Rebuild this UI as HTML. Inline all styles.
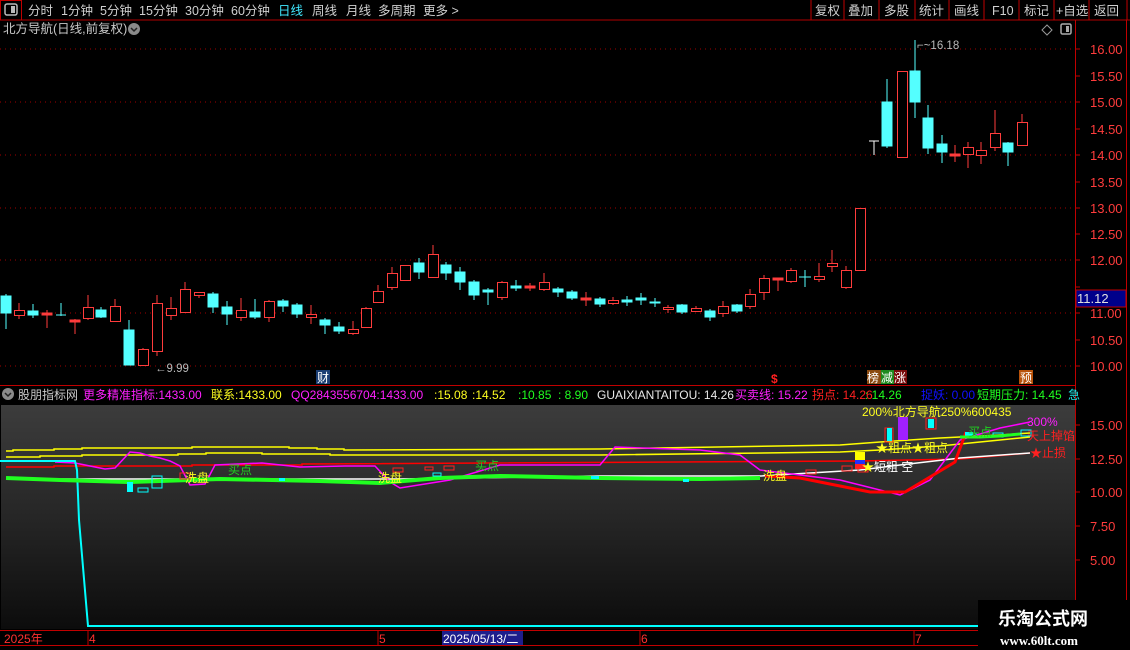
<!DOCTYPE html>
<html><head><meta charset="utf-8">
<style>
html,body{margin:0;padding:0;background:#000;width:1130px;height:650px;overflow:hidden;font-family:"Liberation Sans","Noto Sans CJK SC",sans-serif;}
svg{position:absolute;left:0;top:0}
text{font-family:"Liberation Sans","Noto Sans CJK SC",sans-serif;}
</style></head><body>
<svg width="1130" height="650" viewBox="0 0 1130 650" xmlns="http://www.w3.org/2000/svg">
<defs>
<linearGradient id="g" x1="0" y1="0" x2="0" y2="1">
<stop offset="0" stop-color="#3c3c3c"/><stop offset="0.5" stop-color="#262626"/><stop offset="1" stop-color="#0c0c0c"/>
</linearGradient>
</defs>
<!-- toolbar -->
<rect x="0" y="0" width="1130" height="20" fill="#000"/>
<line x1="0" y1="20" x2="1130" y2="20" stroke="#b00000" stroke-width="1"/>
<rect x="0.5" y="0.5" width="21" height="19.5" fill="none" stroke="#c00000"/>
<rect x="5" y="4" width="12" height="11" rx="2" fill="none" stroke="#bbb" stroke-width="1.5"/><rect x="11" y="6" width="4" height="7" fill="#bbb"/>
<g font-size="12.5" fill="#d0d0d0">
<text x="28" y="15">分时</text><text x="61" y="15">1分钟</text><text x="100" y="15">5分钟</text><text x="139" y="15">15分钟</text><text x="185" y="15">30分钟</text><text x="231" y="15">60分钟</text>
<text x="278" y="15" fill="#40e8ff">日线</text><text x="312" y="15">周线</text><text x="346" y="15">月线</text><text x="378" y="15">多周期</text><text x="423" y="15">更多 &gt;</text>
</g>
<g stroke="#c00000"><line x1="811" y1="0" x2="811" y2="20"/><line x1="844" y1="0" x2="844" y2="20"/><line x1="879" y1="0" x2="879" y2="20"/><line x1="915" y1="0" x2="915" y2="20"/><line x1="949" y1="0" x2="949" y2="20"/><line x1="984" y1="0" x2="984" y2="20"/><line x1="1019" y1="0" x2="1019" y2="20"/><line x1="1054" y1="0" x2="1054" y2="20"/><line x1="1089" y1="0" x2="1089" y2="20"/><line x1="1127" y1="0" x2="1127" y2="20"/></g>
<g font-size="12.5" fill="#d0d0d0">
<text x="815" y="15">复权</text><text x="848" y="15">叠加</text><text x="884" y="15">多股</text><text x="919" y="15">统计</text><text x="954" y="15">画线</text><text x="992" y="15">F10</text><text x="1024" y="15">标记</text><text x="1056" y="15">+自选</text><text x="1094" y="15">返回</text>
</g>
<!-- title row -->
<text x="3" y="33" font-size="12.5" fill="#c8c8c8">北方导航(日线,前复权)</text>
<circle cx="134" cy="29" r="6" fill="#8a8a8a"/><path d="M131 28l3 3 3-3" stroke="#222" stroke-width="1.5" fill="none"/>
<path d="M1047 25l5 5-5 5-5-5z" fill="none" stroke="#999"/>
<rect x="1061" y="24" width="10" height="10" rx="1.5" fill="none" stroke="#aaa" stroke-width="1.5"/><rect x="1066" y="26" width="3" height="6" fill="#aaa"/>
<!-- axes -->
<line x1="1075.5" y1="20" x2="1075.5" y2="630" stroke="#c00000"/>
<line x1="1126.5" y1="20" x2="1126.5" y2="630" stroke="#c00000"/>
<!-- grid -->
<g stroke="#a00000" stroke-dasharray="1,4">
<line x1="0" y1="49" x2="1075" y2="49"/><line x1="0" y1="102" x2="1075" y2="102"/><line x1="0" y1="155" x2="1075" y2="155"/><line x1="0" y1="208" x2="1075" y2="208"/><line x1="0" y1="260" x2="1075" y2="260"/><line x1="0" y1="313" x2="1075" y2="313"/><line x1="0" y1="366" x2="1075" y2="366"/>
</g>
<g stroke="#c00000"><line x1="1075" y1="49" x2="1080" y2="49"/><line x1="1075" y1="76" x2="1080" y2="76"/><line x1="1075" y1="102" x2="1080" y2="102"/><line x1="1075" y1="129" x2="1080" y2="129"/><line x1="1075" y1="155" x2="1080" y2="155"/><line x1="1075" y1="182" x2="1080" y2="182"/><line x1="1075" y1="208" x2="1080" y2="208"/><line x1="1075" y1="234" x2="1080" y2="234"/><line x1="1075" y1="260" x2="1080" y2="260"/><line x1="1075" y1="287" x2="1080" y2="287"/><line x1="1075" y1="313" x2="1080" y2="313"/><line x1="1075" y1="340" x2="1080" y2="340"/><line x1="1075" y1="366" x2="1080" y2="366"/></g>
<g font-size="13" fill="#ff3c3c">
<text x="1090" y="54">16.00</text><text x="1090" y="81">15.50</text><text x="1090" y="107">15.00</text><text x="1090" y="134">14.50</text><text x="1090" y="160">14.00</text><text x="1090" y="187">13.50</text><text x="1090" y="213">13.00</text><text x="1090" y="239">12.50</text><text x="1090" y="265">12.00</text><text x="1090" y="318">11.00</text><text x="1090" y="345">10.50</text><text x="1090" y="371">10.00</text>
</g>
<rect x="1076" y="290" width="50" height="17" fill="#00008b" stroke="#c00000"/>
<text x="1077" y="303" font-size="13" fill="#e0e0e0">11.12</text>
<!-- candles -->
<g stroke-width="1">
<g stroke="#54ffff" fill="#54ffff">
<line x1="6" y1="294" x2="6" y2="329"/><rect x="1" y="296" width="10" height="17"/>
<line x1="33" y1="304" x2="33" y2="318"/><rect x="28" y="311" width="10" height="4"/>
<line x1="61" y1="303" x2="61" y2="316"/><line x1="56" y1="315" x2="66" y2="315"/>
<line x1="101" y1="307" x2="101" y2="318"/><rect x="96" y="310" width="10" height="7"/>
<line x1="129" y1="320" x2="129" y2="365"/><rect x="124" y="330" width="10" height="35"/>
<line x1="213" y1="292" x2="213" y2="313"/><rect x="208" y="294" width="10" height="13"/>
<line x1="227" y1="301" x2="227" y2="325"/><rect x="222" y="307" width="10" height="7"/>
<line x1="255" y1="299" x2="255" y2="319"/><rect x="250" y="312" width="10" height="5"/>
<line x1="283" y1="299" x2="283" y2="312"/><rect x="278" y="301" width="10" height="5"/>
<line x1="297" y1="303" x2="297" y2="318"/><rect x="292" y="305" width="10" height="9"/>
<line x1="325" y1="318" x2="325" y2="334"/><rect x="320" y="320" width="10" height="5"/>
<line x1="339" y1="322" x2="339" y2="334"/><rect x="334" y="327" width="10" height="4"/>
<line x1="419" y1="258" x2="419" y2="279"/><rect x="414" y="263" width="10" height="9"/>
<line x1="446" y1="262" x2="446" y2="280"/><rect x="441" y="265" width="10" height="8"/>
<line x1="460" y1="267" x2="460" y2="290"/><rect x="455" y="272" width="10" height="10"/>
<line x1="474" y1="280" x2="474" y2="300"/><rect x="469" y="282" width="10" height="13"/>
<line x1="488" y1="288" x2="488" y2="305"/><rect x="483" y="290" width="10" height="2"/>
<line x1="516" y1="280" x2="516" y2="291"/><rect x="511" y="286" width="10" height="2"/>
<line x1="558" y1="287" x2="558" y2="297"/><rect x="553" y="289" width="10" height="3"/>
<line x1="572" y1="290" x2="572" y2="300"/><rect x="567" y="292" width="10" height="6"/>
<line x1="600" y1="297" x2="600" y2="307"/><rect x="595" y="299" width="10" height="5"/>
<line x1="627" y1="296" x2="627" y2="306"/><rect x="622" y="300" width="10" height="2"/>
<line x1="641" y1="293" x2="641" y2="305"/><rect x="636" y="298" width="10" height="2"/>
<line x1="655" y1="298" x2="655" y2="307"/><rect x="650" y="302" width="10" height="1"/>
<line x1="682" y1="304" x2="682" y2="314"/><rect x="677" y="305" width="10" height="7"/>
<line x1="710" y1="309" x2="710" y2="321"/><rect x="705" y="311" width="10" height="6"/>
<line x1="737" y1="304" x2="737" y2="313"/><rect x="732" y="305" width="10" height="6"/>
<line x1="805" y1="270" x2="805" y2="287"/><line x1="799" y1="277" x2="811" y2="277"/>
<line x1="887" y1="79" x2="887" y2="148"/><rect x="882" y="102" width="10" height="44"/>
<line x1="915" y1="40" x2="915" y2="118"/><rect x="910" y="71" width="10" height="31"/>
<line x1="928" y1="105" x2="928" y2="154"/><rect x="923" y="118" width="10" height="30"/>
<line x1="942" y1="135" x2="942" y2="163"/><rect x="937" y="144" width="10" height="8"/>
<line x1="1008" y1="142" x2="1008" y2="166"/><rect x="1003" y="143" width="10" height="9"/>
</g>
<g stroke="#ff3c3c" fill="#000">
<line x1="19" y1="303" x2="19" y2="319"/><rect x="14.5" y="310.5" width="10" height="5"/>
<line x1="47" y1="310" x2="47" y2="328"/><rect x="42" y="313" width="10" height="2" fill="#ff3c3c"/>
<line x1="75" y1="319" x2="75" y2="334"/><rect x="70" y="320" width="10" height="2" fill="#ff3c3c"/>
<line x1="88" y1="295" x2="88" y2="320"/><rect x="83.5" y="307.5" width="10" height="11"/>
<line x1="115" y1="299" x2="115" y2="321"/><rect x="110.5" y="306.5" width="10" height="15"/>
<line x1="143" y1="348" x2="143" y2="366"/><rect x="138.5" y="349.5" width="10" height="16"/>
<line x1="157" y1="295" x2="157" y2="356"/><rect x="152.5" y="303.5" width="10" height="48"/>
<line x1="171" y1="297" x2="171" y2="320"/><rect x="166.5" y="308.5" width="10" height="7"/>
<line x1="185" y1="282" x2="185" y2="313"/><rect x="180.5" y="289.5" width="10" height="23"/>
<line x1="199" y1="292" x2="199" y2="298"/><rect x="194.5" y="292.5" width="10" height="3"/>
<line x1="241" y1="298" x2="241" y2="321"/><rect x="236.5" y="310.5" width="10" height="7"/>
<line x1="269" y1="300" x2="269" y2="322"/><rect x="264.5" y="301.5" width="10" height="16"/>
<line x1="311" y1="305" x2="311" y2="324"/><rect x="306.5" y="314.5" width="10" height="3"/>
<line x1="353" y1="321" x2="353" y2="335"/><rect x="348.5" y="329.5" width="10" height="4"/>
<line x1="366" y1="307" x2="366" y2="328"/><rect x="361.5" y="308.5" width="10" height="19"/>
<line x1="378" y1="285" x2="378" y2="303"/><rect x="373.5" y="291.5" width="10" height="11"/>
<line x1="392" y1="267" x2="392" y2="290"/><rect x="387.5" y="273.5" width="10" height="14"/>
<line x1="405" y1="265" x2="405" y2="281"/><rect x="400.5" y="265.5" width="10" height="15"/>
<line x1="433" y1="245" x2="433" y2="277"/><rect x="428.5" y="254.5" width="10" height="23"/>
<line x1="502" y1="281" x2="502" y2="300"/><rect x="497.5" y="282.5" width="10" height="15"/>
<line x1="530" y1="283" x2="530" y2="291"/><rect x="525" y="286" width="10" height="2" fill="#ff3c3c"/>
<line x1="544" y1="273" x2="544" y2="291"/><rect x="539.5" y="282.5" width="10" height="7"/>
<line x1="586" y1="292" x2="586" y2="306"/><rect x="581" y="298" width="10" height="2" fill="#ff3c3c"/>
<line x1="613" y1="297" x2="613" y2="305"/><rect x="608.5" y="300.5" width="10" height="3"/>
<line x1="668" y1="305" x2="668" y2="313"/><rect x="663.5" y="307.5" width="10" height="2"/>
<line x1="696" y1="306" x2="696" y2="312"/><rect x="691.5" y="308.5" width="10" height="3"/>
<line x1="723" y1="301" x2="723" y2="317"/><rect x="718.5" y="306.5" width="10" height="7"/>
<line x1="750" y1="289" x2="750" y2="309"/><rect x="745.5" y="294.5" width="10" height="12"/>
<line x1="764" y1="275" x2="764" y2="300"/><rect x="759.5" y="278.5" width="10" height="14"/>
<line x1="778" y1="278" x2="778" y2="291"/><rect x="773" y="278" width="10" height="2" fill="#ff3c3c"/>
<line x1="791" y1="268" x2="791" y2="283"/><rect x="786.5" y="270.5" width="10" height="11"/>
<line x1="819" y1="263" x2="819" y2="282"/><rect x="814.5" y="276.5" width="10" height="3"/>
<line x1="832" y1="250" x2="832" y2="272"/><rect x="827.5" y="263.5" width="10" height="3"/>
<line x1="846" y1="266" x2="846" y2="289"/><rect x="841.5" y="270.5" width="10" height="17"/>
<rect x="855.5" y="208.5" width="10" height="62"/>
<rect x="897.5" y="71.5" width="10" height="86"/>
<line x1="955" y1="145" x2="955" y2="162"/><rect x="950" y="154" width="10" height="2" fill="#ff3c3c"/>
<line x1="968" y1="142" x2="968" y2="168"/><rect x="963.5" y="147.5" width="10" height="7"/>
<line x1="981" y1="142" x2="981" y2="164"/><rect x="976.5" y="150.5" width="10" height="5"/>
<line x1="995" y1="110" x2="995" y2="151"/><rect x="990.5" y="133.5" width="10" height="14"/>
<line x1="1022" y1="114" x2="1022" y2="146"/><rect x="1017.5" y="122.5" width="10" height="23"/>
</g>
<g stroke="#fff"><line x1="874" y1="141" x2="874" y2="155"/><line x1="869" y1="141" x2="879" y2="141"/></g>
</g>
<text x="155" y="372" font-size="11.5" fill="#bbb">←9.99</text>
<text x="917" y="49" font-size="11.5" fill="#bbb">⌐~16.18</text>
<!-- markers -->
<rect x="316" y="370" width="14" height="14" fill="#1b3e73"/><text x="317" y="382" font-size="12" fill="#fff">财</text>
<text x="771" y="383" font-size="12" fill="#ff2020" font-weight="bold">$</text>
<rect x="867" y="370" width="14" height="14" fill="#8b4a10"/><text x="867" y="382" font-size="12" fill="#fff">榜</text>
<rect x="881" y="370" width="13" height="14" fill="#1d8a1d"/><text x="881" y="382" font-size="12" fill="#fff">减</text>
<rect x="894" y="370" width="13" height="14" fill="#7a0b0b"/><text x="894" y="382" font-size="12" fill="#fff">涨</text>
<rect x="1019" y="370" width="14" height="14" fill="#b8520a"/><text x="1020" y="382" font-size="12" fill="#fff">预</text>
<!-- indicator header -->
<line x1="0" y1="385.5" x2="1075" y2="385.5" stroke="#c00000"/>
<circle cx="8" cy="394" r="6" fill="#8a8a8a"/><path d="M5 393l3 3 3-3" stroke="#222" stroke-width="1.5" fill="none"/>
<g font-size="12">
<text x="18" y="399" fill="#c8c8c8">股朋指标网</text>
<text x="83" y="399" fill="#ff20ff">更多精准指标:1433.00</text>
<text x="211" y="399" fill="#ffff20">联系:1433.00</text>
<text x="291" y="399" fill="#ff20ff">QQ2843556704:1433.00</text>
<text x="434" y="399" fill="#ffff20">:15.08</text>
<text x="472" y="399" fill="#ffff20">:14.52</text>
<text x="518" y="399" fill="#20ff20">:10.85</text>
<text x="558" y="399" fill="#20ff20">: 8.90</text>
<text x="597" y="399" fill="#e8e8e8">GUAIXIANTAITOU: 14.26</text>
<text x="735" y="399" fill="#ff20ff">买卖线: 15.22</text>
<text x="812" y="399" fill="#ff2020">拐点: 14.26</text>
<text x="865" y="399" fill="#20ff20">: 14.26</text>
<text x="921" y="399" fill="#1010ff">捉妖: 0.00</text>
<text x="977" y="399" fill="#20ff20">短期压力: 14.45</text>
<text x="1068" y="399" fill="#20e8e8">急</text>
</g>
<!-- lower panel -->
<rect x="1" y="405" width="1074" height="224" fill="url(#g)"/>
<g stroke="#c00000"><line x1="1075" y1="425" x2="1080" y2="425"/><line x1="1075" y1="459" x2="1080" y2="459"/><line x1="1075" y1="492" x2="1080" y2="492"/><line x1="1075" y1="526" x2="1080" y2="526"/><line x1="1075" y1="560" x2="1080" y2="560"/></g>
<g font-size="13" fill="#ff3c3c"><text x="1090" y="430">15.00</text><text x="1090" y="464">12.50</text><text x="1090" y="497">10.00</text><text x="1090" y="531">7.50</text><text x="1090" y="565">5.00</text></g>
<g fill="none" stroke-width="1.5">
<polyline stroke="#ffff00" points="6,451 13,451 13,450 54,450 54,449 82,449 82,448 192,448 192,447 289,447 289,448 317,448 317,449 344,449 344,450 600,449 840,445 880,442 940,438 1000,435 1030,433"/>
<polyline stroke="#ffff00" points="6,457 40,457 40,456 82,456 82,455 178,455 178,454 206,454 206,453 262,453 262,454 330,454 330,455 600,455 840,452 880,450 940,446 1000,440 1030,437"/>
<polyline stroke="#ff0000" points="6,467 54,467 54,466 192,466 192,465 302,465 302,464 860,461 960,459 1030,453"/>
<polyline stroke="#ffffff" points="6,479 400,479 600,476 760,476 860,470 900,465 960,458 1030,453"/>
<polyline stroke="#ff00ff" points="55,462 75,463 85,465 100,468 105,469 115,468 130,452 140,453 150,456 160,458 170,461 180,466 190,485 205,484 215,465 262,463 300,467 345,466 375,466 390,482 400,488 450,480 500,465 600,465 615,447 700,450 740,455 760,470 840,480 860,485 900,495 930,480 960,440 1000,428 1030,422"/>
<polyline stroke="#ff0000" stroke-width="3" points="765,476 800,478 850,488 870,492 905,492 925,480 955,462 966,432"/>
<polyline stroke="#00ffff" stroke-width="2" points="0,461 75,461 77,470 79,520 88,626 1075,626"/>
<polyline stroke="#20ff20" stroke-width="4" points="6,478 60,480 130,482 160,481 220,479 320,481 380,483 440,478 500,476 600,478 700,479 760,478"/>
</g>
<g fill="#00ffff"><rect x="127" y="482" width="6" height="10"/><rect x="279" y="478" width="6" height="3"/><rect x="591" y="476" width="8" height="3"/><rect x="683" y="479" width="6" height="3"/></g>
<g fill="none" stroke="#00ffff"><rect x="138" y="488" width="10" height="4"/><rect x="152" y="476" width="10" height="12"/><rect x="433" y="473" width="8" height="3"/></g>
<g fill="none" stroke="#ff2020"><rect x="180" y="473" width="10" height="6"/><rect x="393" y="468" width="10" height="4"/><rect x="425" y="467" width="8" height="3"/><rect x="444" y="466" width="10" height="4"/><rect x="806" y="470" width="10" height="4"/><rect x="842" y="466" width="10" height="5"/><rect x="885" y="428" width="8" height="14"/><rect x="926" y="418" width="10" height="11"/><rect x="858" y="468" width="10" height="4"/></g>
<g fill="#00ffff"><rect x="887" y="428" width="5" height="13"/><rect x="928" y="419" width="6" height="9"/><rect x="965" y="432" width="8" height="5"/></g>
<g fill="none" stroke="#00ffff"><rect x="966" y="433" width="10" height="4"/><rect x="993" y="433" width="10" height="4"/><rect x="1021" y="430" width="10" height="6"/></g>
<rect x="898" y="417" width="10" height="23" fill="#a020ff"/>
<rect x="855" y="452" width="10" height="8" fill="#ffff00"/><rect x="855" y="460" width="10" height="4" fill="#2030ff"/><rect x="855" y="464" width="10" height="5" fill="#ff2020"/>
<polyline fill="none" stroke="#20ff20" stroke-width="3" points="960,437 980,437 1000,436 1020,434"/>
<!-- lower panel texts -->
<g font-size="12">
<text x="185" y="482" fill="#ffff20">洗盘</text><text x="378" y="482" fill="#ffff20">洗盘</text><text x="763" y="480" fill="#ffff20">洗盘</text>
<text x="228" y="474" fill="#20d020">买点</text><text x="475" y="470" fill="#20d020">买点</text><text x="968" y="436" fill="#20d020">买点</text>
<text x="862" y="416" fill="#ffff20">200%北方导航250%600435</text>
<text x="1027" y="426" fill="#ff20ff">300%</text>
<text x="1027" y="440" fill="#ff2020">天上掉馅</text>
<text x="1030" y="457" fill="#ff2020">★止损</text>
<text x="876" y="452" fill="#ffff20">★粗点★粗点</text>
<text x="862" y="471" fill="#ffff20">★<tspan fill="#fff">短粗 空</tspan></text>
</g>
<!-- date bar -->
<line x1="0" y1="630.5" x2="1130" y2="630.5" stroke="#c00000"/>
<line x1="0" y1="645.5" x2="1130" y2="645.5" stroke="#c00000"/>
<g font-size="12" fill="#ff3030">
<text x="4" y="643">2025年</text><text x="89" y="643">4</text><text x="379" y="643">5</text><text x="641" y="643">6</text><text x="915" y="643">7</text>
</g>
<g stroke="#c00000"><line x1="88" y1="631" x2="88" y2="645"/><line x1="378" y1="631" x2="378" y2="645"/><line x1="640" y1="631" x2="640" y2="645"/><line x1="914" y1="631" x2="914" y2="645"/></g>
<rect x="442" y="631" width="81" height="14" fill="#1e1e8c"/>
<text x="443" y="643" font-size="12" fill="#fff">2025/05/13/二</text>
<!-- logo -->
<rect x="978" y="600" width="152" height="50" fill="#000"/>
<text x="998" y="625" font-size="18" font-weight="bold" fill="#fff">乐淘公式网</text>
<text x="1000" y="645" font-size="13" font-weight="bold" fill="#fff" font-family="Liberation Serif, serif" style="font-family:'Liberation Serif',serif">www.60lt.com</text>
</svg>
</body></html>
